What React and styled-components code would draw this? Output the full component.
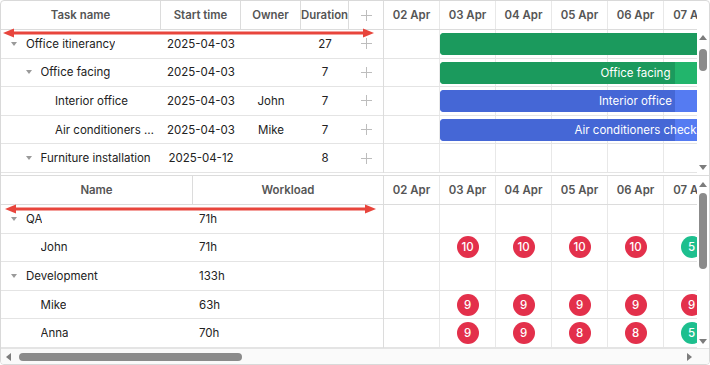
import styled, { createGlobalStyle } from "styled-components";

const GlobalStyle = createGlobalStyle`
  body {
    margin: 0;
    background: #ffffff;
    font-family: Inter, "Noto Sans", sans-serif;
  }
`;

const DAY = 56;
const days = ["02 Apr", "03 Apr", "04 Apr", "05 Apr", "06 Apr", "07 Apr"];

const taskColumns = [
  { key: "text", label: "Task name", width: 160 },
  { key: "start", label: "Start time", width: 80 },
  { key: "owner", label: "Owner", width: 60 },
  { key: "duration", label: "Duration", width: 48 },
  { key: "add", label: "+", width: 34 },
];

const tasks = [
  { id: 1, text: "Office itinerancy", start: "2025-04-03", owner: "", duration: 27, level: 0, parent: true, from: 1, progress: 0.5, kind: "green" },
  { id: 2, text: "Office facing", start: "2025-04-03", owner: "", duration: 7, level: 1, parent: true, from: 1, progress: 0.6, kind: "green" },
  { id: 3, text: "Interior office", start: "2025-04-03", owner: "John", duration: 7, level: 2, from: 1, progress: 0.6, kind: "blue" },
  { id: 4, text: "Air conditioners check", start: "2025-04-03", owner: "Mike", duration: 7, level: 2, from: 1, progress: 0.6, kind: "blue" },
  { id: 5, text: "Furniture installation", start: "2025-04-12", owner: "", duration: 8, level: 1, parent: true, from: 10, progress: 0, kind: "green" },
];

const resources = [
  { id: "qa", name: "QA", workload: "71h", level: 0, parent: true, loads: [] },
  { id: "john", name: "John", workload: "71h", level: 1, loads: [10, 10, 10, 10, 5] },
  { id: "dev", name: "Development", workload: "133h", level: 0, parent: true, loads: [] },
  { id: "mike", name: "Mike", workload: "63h", level: 1, loads: [9, 9, 9, 9, 9] },
  { id: "anna", name: "Anna", workload: "70h", level: 1, loads: [9, 9, 8, 8, 5] },
];

const barColors = {
  green: { done: "#1b9a5d", rest: "#22b56c" },
  blue: { done: "#4567d6", rest: "#557bf2" },
};

const Frame = styled.div`
  position: relative;
  width: 710px;
  height: 365px;
  box-sizing: border-box;
  border: 1px solid #d9d9d9;
  border-radius: 4px;
  overflow: hidden;
  display: flex;
  flex-direction: column;
  background: #fff;
`;

const Panel = styled.div`
  display: flex;
  height: ${(p) => p.$height}px;
  flex-shrink: 0;
`;

const Grid = styled.div`
  width: 383px;
  flex-shrink: 0;
  box-sizing: border-box;
  border-right: 1px solid #dcdcdc;
  display: flex;
  flex-direction: column;
`;

const HeaderRow = styled.div`
  display: flex;
  height: 29px;
  flex-shrink: 0;
  box-sizing: border-box;
  border-bottom: 1px solid #dcdcdc;
`;

const HeaderCell = styled.div`
  width: ${(p) => p.$width}px;
  flex-shrink: 0;
  box-sizing: border-box;
  border-right: ${(p) => (p.$last ? "none" : "1px solid #dcdcdc")};
  display: flex;
  align-items: center;
  justify-content: center;
  font-size: 11.4px;
  font-weight: 600;
  color: #555;
  white-space: nowrap;
  overflow: hidden;
`;

const Row = styled.div`
  display: flex;
  height: ${(p) => p.$height}px;
  flex-shrink: 0;
  box-sizing: border-box;
  border-bottom: 1px solid #e4e4e4;
`;

const Cell = styled.div`
  width: ${(p) => p.$width}px;
  flex-shrink: 0;
  box-sizing: border-box;
  display: flex;
  align-items: center;
  justify-content: ${(p) => p.$align || "center"};
  padding: 0 ${(p) => p.$pad || 0}px;
  font-size: 11.5px;
  color: #222;
  white-space: nowrap;
  overflow: hidden;
`;

const TreeCell = styled(Cell)`
  justify-content: flex-start;
  padding-left: ${(p) => 7 + p.$level * 14.5}px;
  padding-right: 6px;
`;

const Toggle = styled.span`
  width: 12px;
  margin-right: 6px;
  flex-shrink: 0;
  display: flex;
  justify-content: center;

  &::before {
    content: "";
    display: ${(p) => (p.$open ? "block" : "none")};
    border-left: 3.5px solid transparent;
    border-right: 3.5px solid transparent;
    border-top: 4px solid #9a9a9a;
  }
`;

const Label = styled.span`
  overflow: hidden;
  text-overflow: ellipsis;
  white-space: nowrap;
`;

const PlusIcon = styled.span`
  position: relative;
  width: 11px;
  height: 11px;

  &::before,
  &::after {
    content: "";
    position: absolute;
    background: #bdbdbd;
  }
  &::before {
    left: 5px;
    top: 0;
    width: 1px;
    height: 11px;
  }
  &::after {
    top: 5px;
    left: 0;
    width: 11px;
    height: 1px;
  }
`;

const Chart = styled.div`
  flex: 1;
  min-width: 0;
  overflow: hidden;
  display: flex;
  flex-direction: column;
`;

const DayRow = styled.div`
  position: relative;
  display: flex;
  height: ${(p) => p.$height}px;
  flex-shrink: 0;
  box-sizing: border-box;
  border-bottom: 1px solid ${(p) => (p.$header ? "#dcdcdc" : "#e4e4e4")};
`;

const DayCell = styled.div`
  width: ${DAY}px;
  flex-shrink: 0;
  box-sizing: border-box;
  border-right: 1px solid #e8e8e8;
  display: flex;
  align-items: center;
  justify-content: center;
  font-size: 11.4px;
  font-weight: 600;
  color: #555;
  white-space: nowrap;
`;

const Bar = styled.div`
  position: absolute;
  top: 3px;
  height: 22px;
  border-radius: 4px;
  overflow: hidden;
  background: ${(p) => barColors[p.$kind].rest};
  display: flex;
  align-items: center;
  justify-content: center;
`;

const Progress = styled.div`
  position: absolute;
  left: 0;
  top: 0;
  bottom: 0;
  background: ${(p) => barColors[p.$kind].done};
`;

const BarText = styled.span`
  position: relative;
  font-size: 11.5px;
  color: #fff;
  white-space: nowrap;
`;

const Badge = styled.span`
  width: 22px;
  height: 22px;
  border-radius: 50%;
  background: ${(p) => (p.$low ? "#1dbf8e" : "#e3304b")};
  color: #fff;
  font-size: 11.5px;
  font-weight: 500;
  display: flex;
  align-items: center;
  justify-content: center;
`;

const VScroll = styled.div`
  width: 12px;
  flex-shrink: 0;
  box-sizing: border-box;
  padding-top: ${(p) => p.$offset || 0}px;
  display: flex;
  flex-direction: column;
  align-items: center;
`;

const Arrow = styled.span`
  height: ${(p) => p.$box}px;
  display: flex;
  align-items: center;
  justify-content: center;
  flex-shrink: 0;
  margin-top: ${(p) => (p.$end ? "auto" : "0")};

  &::before {
    content: "";
    border-left: 4px solid transparent;
    border-right: 4px solid transparent;
    ${(p) => (p.$dir === "up" ? "border-bottom" : "border-top")}: 5px solid #7c7c7c;
  }
`;

const SideArrow = styled.span`
  width: ${(p) => p.$box}px;
  display: flex;
  align-items: center;
  justify-content: center;
  flex-shrink: 0;
  margin-left: ${(p) => (p.$end ? "auto" : "0")};

  &::before {
    content: "";
    border-top: 4px solid transparent;
    border-bottom: 4px solid transparent;
    ${(p) => (p.$dir === "left" ? "border-right" : "border-left")}: 5px solid #7c7c7c;
  }
`;

const VThumb = styled.div`
  width: 8px;
  border-radius: 4px;
  background: #8b8b8b;
  flex-shrink: 0;
`;

const Separator = styled.div`
  height: 3px;
  flex-shrink: 0;
  box-sizing: border-box;
  border-bottom: 1px solid #dcdcdc;
`;

const HScroll = styled.div`
  flex: 1;
  display: flex;
  align-items: center;
  background: #fafafa;
  border-top: 1px solid #e4e4e4;
`;

const HThumb = styled.div`
  height: 8px;
  border-radius: 4px;
  background: #8b8b8b;
  flex-shrink: 0;
`;

const Corner = styled.div`
  width: 13px;
  flex-shrink: 0;
`;

const Annotation = styled.svg`
  position: absolute;
  left: 0;
  top: ${(p) => p.$top}px;
  pointer-events: none;
`;

const RedArrow = ({ top, from, to }) => (
  <Annotation $top={top} width="390" height="14" viewBox="0 0 390 14">
    <line x1={from + 8} y1="7" x2={to - 8} y2="7" stroke="#e8453c" strokeWidth="3" />
    <polygon points={`${from},7 ${from + 11},2.5 ${from + 11},11.5`} fill="#e8453c" />
    <polygon points={`${to},7 ${to - 11},2.5 ${to - 11},11.5`} fill="#e8453c" />
  </Annotation>
);

const TaskPanel = () => (
  <Panel $height={172}>
    <Grid>
      <HeaderRow>
        {taskColumns.map((c, i) => (
          <HeaderCell key={c.key} $width={c.width} $last={i === taskColumns.length - 1}>
            {c.key === "add" ? <PlusIcon /> : c.label}
          </HeaderCell>
        ))}
      </HeaderRow>
      {tasks.map((t) => (
        <Row key={t.id} $height={28.6}>
          <TreeCell $width={160} $level={t.level}>
            <Toggle $open={t.parent} />
            <Label>{t.text}</Label>
          </TreeCell>
          <Cell $width={80}>{t.start}</Cell>
          <Cell $width={60}>{t.owner}</Cell>
          <Cell $width={48}>{t.duration}</Cell>
          <Cell $width={34}>
            <PlusIcon />
          </Cell>
        </Row>
      ))}
    </Grid>
    <Chart>
      <DayRow $height={29} $header>
        {days.map((d) => (
          <DayCell key={d}>{d}</DayCell>
        ))}
      </DayRow>
      {tasks.map((t) => (
        <DayRow key={t.id} $height={28.6}>
          {days.map((d) => (
            <DayCell key={d} />
          ))}
          {t.from < days.length && (
            <Bar $kind={t.kind} style={{ left: t.from * DAY, width: t.duration * DAY - 1 }}>
              <Progress $kind={t.kind} style={{ width: `${t.progress * 100}%` }} />
              {t.level > 0 && <BarText>{t.text}</BarText>}
            </Bar>
          )}
        </DayRow>
      ))}
    </Chart>
    <VScroll $offset={29}>
      <Arrow $dir="up" $box={14} />
      <VThumb style={{ marginTop: 5, height: 22 }} />
      <Arrow $dir="down" $box={12} $end />
    </VScroll>
  </Panel>
);

const ResourcePanel = () => (
  <Panel $height={172}>
    <Grid>
      <HeaderRow>
        <HeaderCell $width={192}>Name</HeaderCell>
        <HeaderCell $width={190} $last>
          Workload
        </HeaderCell>
      </HeaderRow>
      {resources.map((r) => (
        <Row key={r.id} $height={28.6}>
          <TreeCell $width={192} $level={r.level}>
            <Toggle $open={r.parent} />
            <Label>{r.name}</Label>
          </TreeCell>
          <Cell $width={190} $align="flex-start" $pad={6}>
            {r.workload}
          </Cell>
        </Row>
      ))}
    </Grid>
    <Chart>
      <DayRow $height={29} $header>
        {days.map((d) => (
          <DayCell key={d}>{d}</DayCell>
        ))}
      </DayRow>
      {resources.map((r) => (
        <DayRow key={r.id} $height={28.6}>
          {days.map((d, i) => {
            const load = r.loads[i - 1];
            return <DayCell key={d}>{load !== undefined && <Badge $low={load <= 5}>{load}</Badge>}</DayCell>;
          })}
        </DayRow>
      ))}
    </Chart>
    <VScroll>
      <Arrow $dir="up" $box={16} />
      <VThumb style={{ marginTop: 1, height: 76 }} />
      <Arrow $dir="down" $box={14} $end />
    </VScroll>
  </Panel>
);

export default function App() {
  return (
    <>
      <GlobalStyle />
      <Frame>
        <TaskPanel />
        <Separator />
        <ResourcePanel />
        <HScroll>
          <SideArrow $dir="left" $box={14} />
          <HThumb style={{ marginLeft: 4, width: 223 }} />
          <SideArrow $dir="right" $box={14} $end />
          <Corner />
        </HScroll>
        <RedArrow top={25} from={2} to={373} />
        <RedArrow top={201} from={4} to={375} />
      </Frame>
    </>
  );
}
